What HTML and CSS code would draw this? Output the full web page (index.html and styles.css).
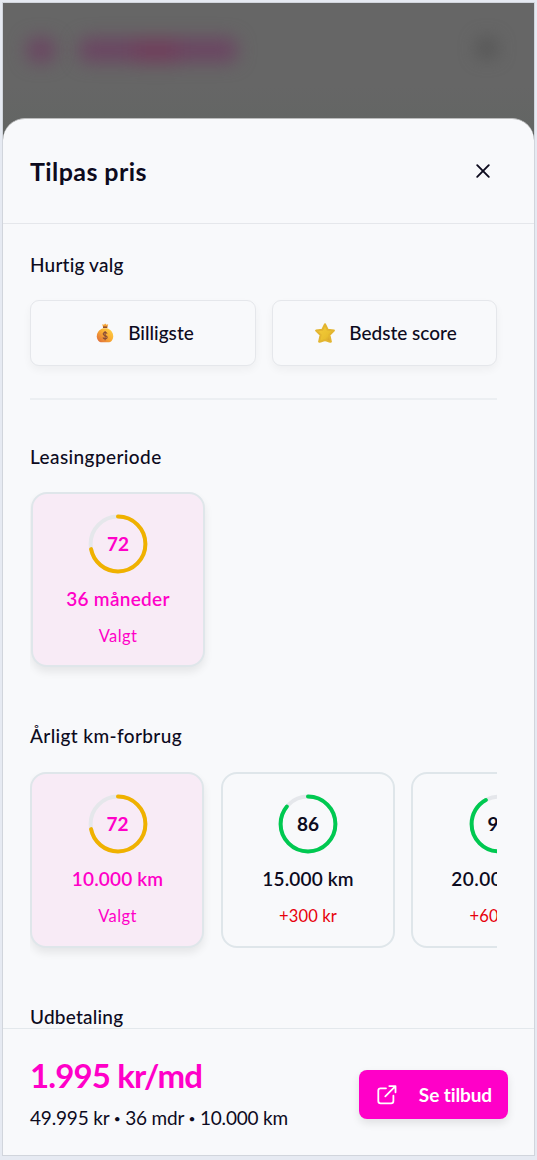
FILE: index.html
```html
<!DOCTYPE html>
<html lang="da">
<head>
<meta charset="utf-8">
<title>Tilpas pris</title>
<link rel="stylesheet" href="styles.css">
</head>
<body>
<div class="frame">
  <div class="backdrop">
    <div class="brand-blur"><i class="blob blob-mark"></i><i class="blob blob-name"><i class="blob-core"></i></i></div>
    <i class="blob blob-menu"></i>
  </div>
  <section class="sheet">
    <header class="header">
      <h1 class="title">Tilpas pris</h1>
      <button class="close" aria-label="Luk">
        <svg width="16" height="16" viewBox="0 0 16 16"><path d="M2.200 2.200l11.600 11.600M13.800 2.200L2.200 13.800"/></svg>
      </button>
    </header>
    <main class="content">
      <h2 class="heading t-quick">Hurtig valg</h2>
      <div class="quick">
        <button class="quick-btn">
          <svg class="bag" width="18" height="20" viewBox="0 0 18 20">
            <defs><linearGradient id="gold" x1="1" y1="0" x2="0" y2="1"><stop offset="0" stop-color="#ffd84e"/><stop offset=".45" stop-color="#faae32"/><stop offset="1" stop-color="#dc663c"/></linearGradient></defs>
            <path d="M6.200 1.200L8 1.700 9.200.4l1.200 1.300 1.800-.5-.9 3.100H7.100z" fill="#f5a233"/>
            <path d="M7.200 5.200C3.300 6.400.8 9.500.8 13.200c0 3.800 2.400 6.100 5 6.100h6.400c2.800 0 5-2.300 5-6.100 0-3.700-2.500-6.800-6.200-8z" fill="url(#gold)"/>
            <path d="M7 4.200h4.300" stroke="#93502e" stroke-width="1.600"/>
            <path d="M11.100 10.600c-.4-.9-1.100-1.200-2-1.200-1.200 0-1.900.6-1.900 1.500 0 2.200 4 1.200 4 3.400 0 1-.8 1.600-2 1.600-1.100 0-1.900-.500-2.200-1.400M9.100 8v9.200" fill="none" stroke="#874a38" stroke-width="1.100"/>
          </svg>
          <span class="t-cheap">Billigste</span>
        </button>
        <button class="quick-btn">
          <svg class="star" width="20" height="20" viewBox="0 0 20 20">
            <defs><linearGradient id="star" x1="0" y1="0" x2="1" y2="1"><stop offset="0" stop-color="#f8cf3e"/><stop offset=".65" stop-color="#e9bf2e"/><stop offset="1" stop-color="#c98a2c"/></linearGradient></defs>
            <path d="M10 1.200l2.700 5.500 6.200.9-4.500 4.400 1.500 6.600c-2 .8-3.100-1.400-5.900-1.400S6 19.300 4.100 18.600L5.600 12 1.100 7.600l6.200-.9z" fill="url(#star)" stroke="#e3b530" stroke-width="2" stroke-linejoin="round"/>
          </svg>
          <span class="t-best">Bedste score</span>
        </button>
      </div>
      <hr class="divider">
      <h2 class="heading t-period">Leasingperiode</h2>
      <div class="cards cards-period">
        <article class="card selected">
          <div class="ring"><svg viewBox="0 0 60 60"><circle class="track" cx="30" cy="30" r="27.400"/><circle class="arc amber" cx="30" cy="30" r="27.400" pathLength="100" stroke-dasharray="72 100"/></svg><b>72</b></div>
          <strong class="t-months">36 måneder</strong><small class="t-chosen">Valgt</small>
        </article>
      </div>
      <h2 class="heading t-km">Årligt km-forbrug</h2>
      <div class="cards cards-km">
        <article class="card selected">
          <div class="ring"><svg viewBox="0 0 60 60"><circle class="track" cx="30" cy="30" r="27.400"/><circle class="arc amber" cx="30" cy="30" r="27.400" pathLength="100" stroke-dasharray="72 100"/></svg><b>72</b></div>
          <strong class="t-dist">10.000 km</strong><small class="t-chosen">Valgt</small>
        </article>
        <article class="card">
          <div class="ring"><svg viewBox="0 0 60 60"><circle class="track" cx="30" cy="30" r="27.400"/><circle class="arc green" cx="30" cy="30" r="27.400" pathLength="100" stroke-dasharray="86 100"/></svg><b>86</b></div>
          <strong class="t-dist">15.000 km</strong><small class="extra">+300 kr</small>
        </article>
        <article class="card">
          <div class="ring"><svg viewBox="0 0 60 60"><circle class="track" cx="30" cy="30" r="27.400"/><circle class="arc green" cx="30" cy="30" r="27.400" pathLength="100" stroke-dasharray="92 100"/></svg><b>92</b></div>
          <strong class="t-dist t-twenty">20.000 km</strong><small class="extra">+600 kr</small>
        </article>
      </div>
      <h2 class="heading t-down">Udbetaling</h2>
    </main>
    <footer class="footer">
      <div class="summary">
        <div class="price">1.995 kr/md</div>
        <div class="terms">49.995 kr <i>•</i> 36 mdr <i>•</i> 10.000 km</div>
      </div>
      <button class="offer">
        <svg width="20" height="20" viewBox="0 0 20 20"><path d="M9 3.300H3.600Q1.300 3.300 1.300 5.600v10.500q0 2.300 2.300 2.300h10.500q2.300 0 2.300-2.300V10.700M12.300 1.100h6.200v6.200M18.200 1.400L8.300 11.300"/></svg>
        <span>Se tilbud</span>
      </button>
    </footer>
  </section>
</div>
</body>
</html>
```
FILE: styles.css
```css
* { box-sizing: border-box; }
body { margin: 0; padding: 2px; width: 537px; height: 1160px; overflow: hidden; background: #e6eaf2; color: #0d0b1e; font-family: Lato, "Noto Sans", sans-serif; font-variant-ligatures: none; }
h1, h2 { margin: 0; }
button { font: inherit; color: inherit; padding: 0; font-variant-ligatures: none; }
span, strong, small, h1, h2, .price, .terms { white-space: nowrap; }
.frame { width: 533px; height: 1154px; border: 1px solid #d1d5dc; overflow: hidden; display: flex; flex-direction: column; background: #646665; }
.backdrop { flex: none; height: 137px; margin-bottom: -22px; background: linear-gradient(#666 60%, #626563); display: flex; justify-content: space-between; align-items: flex-start; padding: 35px 37px 0 24px; }
.brand-blur { display: flex; gap: 24px; }
.blob { display: block; filter: blur(9px); background: #6b4562; border-radius: 8px; }
.blob-mark { width: 28px; height: 24px; background: #6b4562; }
.blob-name { width: 158px; height: 24px; padding-left: 55px; }
.blob-core { display: block; width: 44px; height: 25px; background: #703e5c; }
.blob-menu { width: 20px; height: 20px; background: #525252; border-radius: 10px; }
.sheet { flex: 1; min-height: 0; display: flex; flex-direction: column; background: #f8f9fb; border-radius: 22px 22px 0 0; border-top: 1px solid #bbbcbd; }
.header { flex: none; height: 105px; display: flex; align-items: center; justify-content: space-between; padding: 0 43px 0 27px; border-bottom: 1px solid #e5e7eb; }
.title { font-size: 25px; line-height: 30px; font-weight: 700; letter-spacing: .42px; }
.close { width: 16px; height: 16px; border: 0; background: none; display: flex; }
.close svg { fill: none; stroke: #0d0b1e; stroke-width: 1.900; stroke-linecap: round; }
.content { flex: 1; min-height: 0; overflow: hidden; padding: 27px 37px 0 27px; }
.heading { font-size: 19px; line-height: 28px; font-weight: 500; }
.t-quick { letter-spacing: .2px; }
.quick { margin-top: 21px; display: grid; grid-template-columns: 226px 225px; gap: 16px; height: 66px; }
.quick-btn { display: flex; align-items: center; justify-content: center; border: 1px solid #e5e7eb; border-radius: 9px; background: #f8f9fb; box-shadow: 0 4px 8px rgba(0,0,0,.045); font-size: 19px; line-height: 28px; font-weight: 500; gap: 14px; padding: 0 0 0 4px; }
.quick-btn svg { margin-top: -1px; }
.quick-btn + .quick-btn { padding-left: 3px; }
.divider { height: 2px; margin: 32px 0 0; border: 0; background: #eceff2; }
.t-period { margin-top: 43px; letter-spacing: .4px; }
.cards { display: flex; gap: 16.500px; overflow: hidden; height: 200px; }
.cards-period { margin-top: 21px; padding-left: 1px; }
.card { flex: none; width: 174px; height: 175px; border: 2px solid #dfe6ea; border-radius: 16px; display: flex; flex-direction: column; align-items: center; padding-top: 20px; }
.cards-km .card { height: 176px; }
.selected { background: #f8ebf6; color: #ff00c8; box-shadow: 0 5px 9px rgba(0,0,0,.08); }
.ring { flex: none; width: 60px; height: 60px; display: grid; place-items: center; }
.ring svg, .ring b { grid-area: 1 / 1; }
.ring svg { width: 60px; height: 60px; fill: none; stroke-width: 4; transform: rotate(-90deg); }
.ring b { font-size: 19px; line-height: 24px; }
.track { stroke: #e5e7eb; }
.arc { stroke-linecap: round; }
.amber { stroke: #f0b100; }
.green { stroke: #00c951; }
.card strong { font-size: 19px; line-height: 28px; margin-top: 11px; font-weight: 600; letter-spacing: .15px; }
.card .t-months { letter-spacing: .3px; }
.card .t-twenty { letter-spacing: .5px; }
.card small { font-size: 16.500px; line-height: 24px; margin-top: 11px; letter-spacing: .15px; }
.card .t-chosen { letter-spacing: .4px; }
.cards-km .card { padding-left: 1px; }
.extra { color: #e7000b; }
.t-km { margin-top: 30px; letter-spacing: .38px; }
.cards-km { margin-top: 22px; }
.t-down { margin-top: 31px; letter-spacing: .22px; }
.footer { flex: none; height: 127px; border-top: 1px solid #e3e8ec; display: flex; align-items: center; justify-content: space-between; padding: 0 26px 0 27px; }
.price { color: #ff00c8; font-size: 33px; line-height: 42px; font-weight: 700; letter-spacing: -.88px; margin-top: 3px; }
.terms { font-size: 19px; line-height: 28px; margin-top: 8px; letter-spacing: -.18px; }
.terms i { font-size: 12px; font-style: normal; vertical-align: 2px; }
.offer { width: 149px; height: 49px; margin-top: 5px; border: 0; border-radius: 8px; background: #ff00c8; color: #fff; display: flex; align-items: center; justify-content: space-between; padding: 0 16px 0 18px; font-size: 19px; font-weight: 700; letter-spacing: -.1px; box-shadow: 0 4px 8px rgba(0,0,0,.1); }
.offer svg { fill: none; stroke: #fff; stroke-width: 1.800; stroke-linecap: round; stroke-linejoin: round; }
```
